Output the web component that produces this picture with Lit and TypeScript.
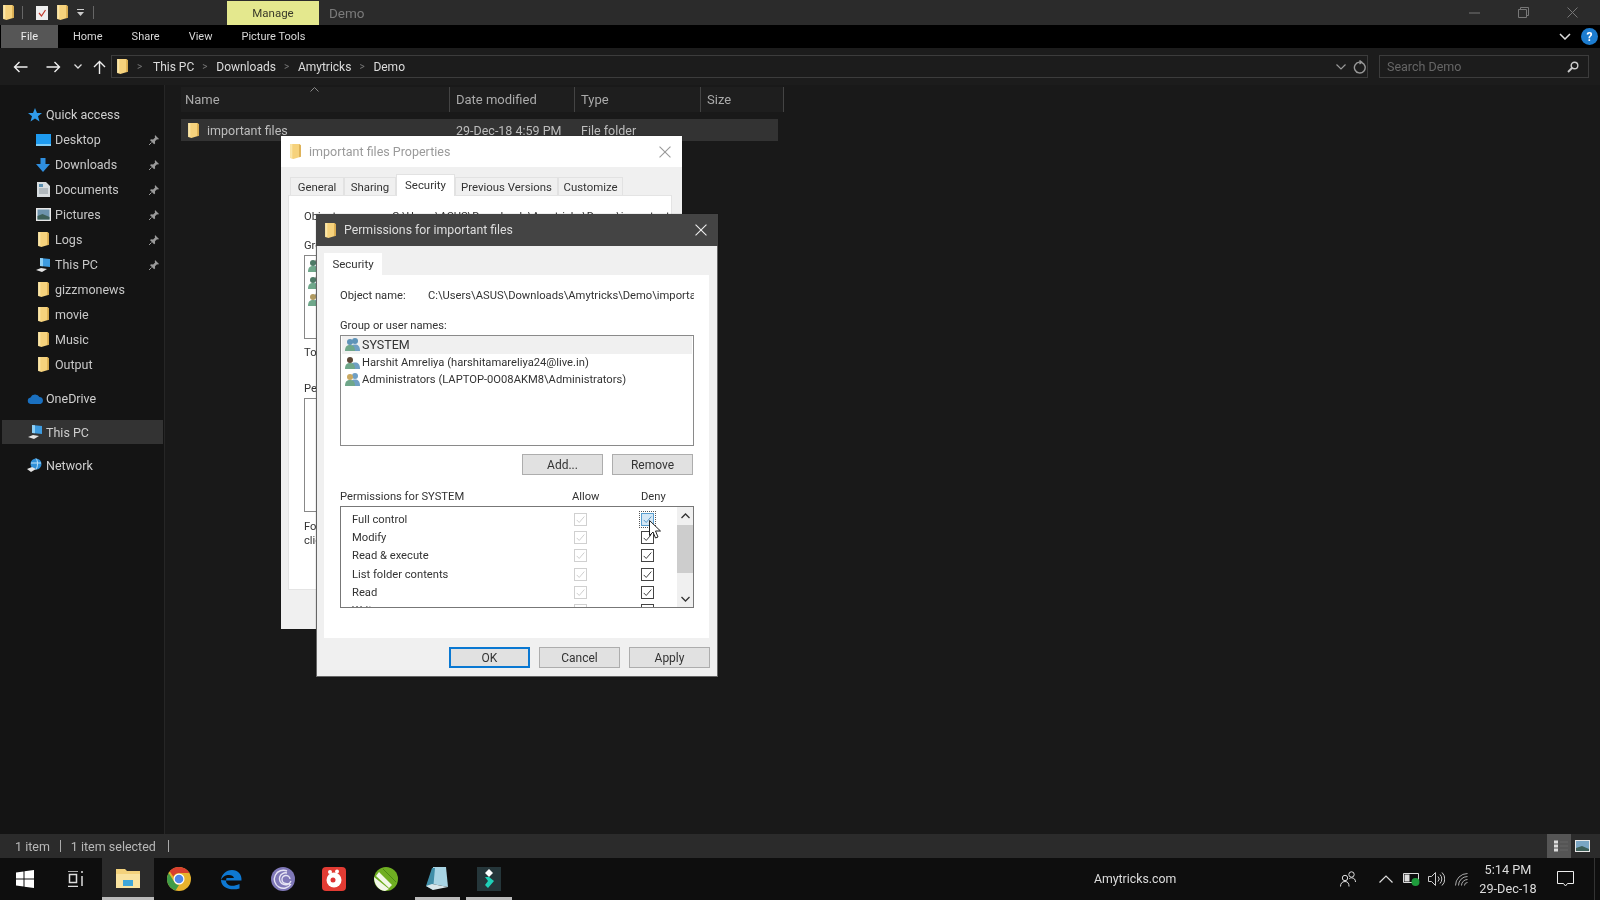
import { LitElement, html, css } from "lit";
import { customElement } from "lit/decorators.js";

const folder = (w = 13, h = 17) => html`<svg width=${w} height=${h} viewBox="0 0 12 16"><path d="M1 1h8.5l1.5 1v11l-7 2-3-1z" fill="#f6d27c"/><path d="M1 1h2v13H1z" fill="#fbe6a8"/><path d="M9.5 1l1.5 1v11l-1.5.4z" fill="#d9ab4e"/></svg>`;
const pin = html`<svg class="pin" width="12" height="12" viewBox="0 0 12 12"><path d="M7 1l4 4-1 .6-1-.3-2 2 .1 2.2-1 .8-4-4 .8-1 2.2.1 2-2-.3-1z" fill="#9a9a9a"/><path d="M3.5 8.5L1 11" stroke="#9a9a9a"/></svg>`;
const pc = html`<svg width="17" height="16" viewBox="0 0 17 16"><path d="M5 1l10 1v8l-10-1z" fill="#3d9be0"/><path d="M5 1l3 .3v8L5 9z" fill="#8fd0f5"/><path d="M1 13l5-2 6 1-5 3z" fill="#e4e4e4"/></svg>`;
const users = (a: string, b: string) => html`<svg class="user" width="15" height="15" viewBox="0 0 15 15"><circle cx="10" cy="4" r="3" fill=${b}/><path d="M5 14c0-5 2-6.5 5-6.5s5 1.5 5 6.5z" fill="#6f9fc4"/><circle cx="5" cy="5" r="3" fill=${a}/><path d="M0 14c0-4.5 2-6 5-6s5 1.5 5 6z" fill="#6fa78a"/></svg>`;
const tick = html`<svg viewBox="0 0 13 13" width="11" height="11"><path d="M2 7l3 3 6-7" fill="none" stroke="currentColor" stroke-width="1.1"/></svg>`;

@customElement("app-root")
export class AppRoot extends LitElement {
  static styles = css`
    :host { display: block; width: 1600px; height: 900px; overflow: hidden; position: relative; background: #191919; font-family: Roboto, "Open Sans", sans-serif; font-size: 12.5px; color: #d0d0d0; filter: blur(0.35px); }
    svg { display: block; flex: none; }
    .shell { display: flex; flex-direction: column; height: 900px; }

    .titlebar { height: 25px; background: #2b2b2b; display: flex; align-items: center; flex: none; }
    .qat { display: flex; align-items: center; width: 227px; padding-left: 2px; box-sizing: border-box; }
    .qat .sep { width: 1px; height: 13px; background: #666; }
    .qat-1 { margin-left: 7px; margin-right: 13px; }
    .qat-doc { margin-right: 8px; }
    .qat-fold { margin-right: 8px; }
    .qat-down { margin-right: 9px; }
    .manage { width: 92px; height: 24px; margin-top: 1px; background: #e4e88e; color: #3a3a2a; display: flex; align-items: center; justify-content: center; font-size: 11.5px; }
    .doc-title { margin-left: 10px; color: #7b7b7b; font-size: 13.5px; flex: 1; }
    .winbtns { display: flex; align-items: center; gap: 38px; padding-right: 22px; }

    .ribbon { height: 23px; background: #000; display: flex; align-items: center; flex: none; font-size: 11px; color: #d8d8d8; padding-left: 1px; }
    .file { width: 57px; height: 23px; background: #565656; color: #eee; display: flex; align-items: center; justify-content: center; margin-right: 15px; }
    .rtab-home { margin-right: 29px; }
    .rtab-share { margin-right: 29px; }
    .rtab-view { margin-right: 29px; }
    .ribbon-end { margin-left: auto; display: flex; align-items: center; gap: 10px; padding-right: 2px; }
    .help { width: 17px; height: 17px; border-radius: 50%; background: #1c7ccf; color: #fff; font-size: 12px; font-weight: 700; display: flex; align-items: center; justify-content: center; }

    .addressrow { height: 37px; background: #1c1c1c; flex: none; display: flex; align-items: center; padding-left: 13px; }
    .nav { display: flex; align-items: center; width: 98px; }
    .nav-back { margin-right: 18px; }
    .nav-fwd { margin-right: 13px; }
    .nav-down { margin-right: 11px; }
    .address { width: 1257px; height: 23px; box-sizing: border-box; border: 1px solid #3c3c3c; display: flex; align-items: center; padding-left: 4px; color: #dcdcdc; font-size: 12px; }
    .crumb-sep { color: #777; font-size: 10px; width: 7px; flex: none; }
    .c1 { margin: 0 9px 0 8px; }
    .crumb-sep.c { margin: 0 7px 0 8px; }
    .address-end { margin-left: auto; display: flex; align-items: center; gap: 7px; padding-right: 1px; }
    .search { width: 210px; height: 23px; margin-left: 11px; box-sizing: border-box; border: 1px solid #3c3c3c; display: flex; align-items: center; justify-content: space-between; padding: 0 9px 0 7px; color: #666; font-size: 12.5px; }

    .body { flex: 1; display: flex; min-height: 0; }
    .side { width: 165px; box-sizing: border-box; background: #141414; border-right: 1px solid #262626; padding: 17px 0 0 0; flex: none; }
    .item { height: 25px; display: flex; align-items: center; padding-left: 31px; position: relative; color: #c8c8c8; }
    .item .ic { width: 24px; display: flex; justify-content: center; }
    .item .pin { position: absolute; left: 148px; top: 7px; }
    .item.top { padding-left: 24px; color: #cfcfcf; }
    .item.top .ic { width: 22px; }
    .gap { margin-top: 9px; }
    .item.sel { background: #333; margin: 9px 1px 0 2px; padding-left: 22px; height: 24px; }

    .main { flex: 1; padding: 2px 0 0 16px; background: #191919; }
    .cols { display: grid; grid-template-columns: 269px 125px 126px 83px; width: 603px; }
    .head { height: 25px; align-items: center; color: #aaa; background: #1e1e1e; position: relative; font-size: 13px; }
    .head div { height: 25px; display: flex; align-items: center; padding-left: 6px; border-right: 1px solid #444; box-sizing: border-box; }
    .head div:first-child { padding-left: 4px; }
    .caret { position: absolute; left: 129px; top: 0; }
    .row { height: 22px; margin-top: 7px; width: 597px; background: #333; align-items: center; color: #bdbdbd; }
    .row div { padding-left: 6px; }
    .namecell { display: flex; align-items: center; gap: 7px; }

    .status { height: 24px; flex: none; background: #2b2b2b; display: flex; align-items: center; padding-left: 15px; color: #b8b8b8; font-size: 12.5px; }
    .status i { width: 1px; height: 12px; background: #aaa; margin: 0 10px; }
    .status i.end { margin-left: 12px; }
    .viewbtns { margin-left: auto; display: flex; align-items: center; height: 24px; padding-right: 10px; gap: 4px; }
    .vb-on { width: 24px; height: 24px; background: #555; display: flex; align-items: center; padding-left: 7px; box-sizing: border-box; }

    .taskbar { height: 42px; flex: none; background: #0e0e0e; display: flex; align-items: center; color: #ddd; position: relative; }
    .tb { width: 51.6px; height: 42px; box-sizing: border-box; display: flex; align-items: center; justify-content: center; flex: none; }
    .tb-start { width: 50px; }
    .tb-view { width: 52px; }
    .tb-active { background: #2b2b2b; border-bottom: 3px solid #bbb; }
    .tb-open { position: relative; }
    .tb-open::after { content: ""; position: absolute; left: 3px; right: 3px; bottom: 0; height: 3px; background: #bbb; }
    .brand { margin-left: 579.2px; font-size: 12.3px; width: 246px; flex: none; }
    .tray { display: flex; align-items: center; }
    .clock { width: 80px; text-align: center; font-size: 12.7px; line-height: 19px; }
    .tr-1 { margin-right: 22px; }
    .tr-2 { margin-right: 10px; }
    .tr-3 { margin-right: 8px; }
    .tr-4 { margin-right: 10px; }
    .notif { margin-left: 9px; }
    .desk { width: 1px; height: 42px; background: #333; margin-left: 20px; }

    .window { position: absolute; box-sizing: border-box; background: #f0f0f0; color: #222; font-size: 11.2px; box-shadow: 0 0 1px #0006; }
    .props { left: 281px; top: 136px; width: 401px; height: 493px; }
    .perms { left: 316px; top: 214px; width: 402px; height: 463px; border: 1px solid #666; border-top: none; }
    .wtitle { height: 31px; display: flex; align-items: center; gap: 7px; padding: 0 11px 0 8px; font-size: 12.5px; }
    .wtitle span { flex: 1; }
    .props .wtitle { background: #fff; color: #9a9a9a; }
    .perms .wtitle { height: 32px; background: #444; color: #ddd; margin: 0 -1px; padding-left: 8px; font-size: 12.3px; }

    .tabs { display: flex; align-items: flex-end; height: 28px; padding-left: 9px; font-size: 11.4px; color: #333; }
    .tab { height: 18px; display: flex; align-items: center; justify-content: center; background: #f0f0f0; border: 1px solid #e2e2e2; border-bottom: none; box-sizing: border-box; }
    .tab.on { height: 22px; background: #fff; margin-bottom: -1px; position: relative; padding-bottom: 2px; }
    .t1 { width: 54px; } .t2 { width: 52px; } .t3 { width: 59px; } .t4 { width: 103px; } .t5 { width: 65px; }
    .panel { margin: 0 10px 0 7px; height: 395px; background: #fff; border: 1px solid #e4e4e4; box-sizing: border-box; padding: 11px 0 0 15px; color: #333; }
    .props-obj { display: flex; height: 18px; align-items: center; white-space: nowrap; overflow: hidden; }
    .props-obj b { font-weight: 400; width: 88px; flex: none; }
    .stub-label { height: 18px; display: flex; align-items: center; margin-top: 11px; }
    .stub-box { border: 1px solid #888; width: 300px; box-sizing: border-box; }
    .stub-1 { height: 84px; margin-top: 1px; padding: 2px 0 0 3px; display: flex; flex-direction: column; gap: 2px; }
    .stub-2 { height: 114px; margin-top: 1px; }
    .stub-3 { margin-top: 4px; }
    .stub-4 { margin-top: 18px; }
    .stub-5 { margin-top: 7px; height: 14px; }
    .stub-6 { margin-top: 0; height: 14px; }

    .secpane { margin: 0 8px 0 7px; }
    .sectabs { height: 29px; display: flex; align-items: flex-end; }
    .sectab { width: 58px; height: 22px; background: #fff; display: flex; align-items: center; justify-content: center; font-size: 11.5px; color: #333; }
    .secbody { height: 363px; background: #fff; padding: 11px 15px 0 16px; box-sizing: border-box; color: #333; }
    .objrow { height: 18px; display: flex; align-items: center; white-space: nowrap; overflow: hidden; }
    .objrow b { font-weight: 400; width: 88px; flex: none; }
    .label { height: 18px; display: flex; align-items: center; margin-top: 12px; margin-bottom: 1px; }
    .users { height: 111px; border: 1px solid #8a8a8a; box-sizing: border-box; padding: 0 1px 1px; }
    .urow { height: 17.5px; display: flex; align-items: center; gap: 2px; padding-left: 3px; }
    .urow.first { background: #f0f0f0; color: #333; font-size: 12.5px; }
    .btnrow { display: flex; justify-content: flex-end; gap: 9px; margin: 8px 1px 0 0; }
    .btn { width: 81px; height: 21px; box-sizing: border-box; background: #e1e1e1; border: 1px solid #adadad; display: flex; align-items: center; justify-content: center; font-size: 12px; color: #333; }
    .btn.def { border: 2px solid #0a78d2; }
    .permhead { display: grid; grid-template-columns: 228px 69px 60px; height: 18px; align-items: center; margin-top: 12px; margin-bottom: 1px; }
    .permhead span:nth-child(n+2) { padding-left: 4px; }
    .permlist { height: 102px; border: 1px solid #777; box-sizing: border-box; display: flex; }
    .rows { flex: 1; overflow: hidden; padding-top: 3px; }
    .prow { height: 18.3px; display: grid; grid-template-columns: 222px 67px 60px; padding-left: 11px; align-items: center; }
    .cb { width: 13px; height: 13px; box-sizing: border-box; border: 1px solid #444; display: flex; align-items: center; justify-content: center; color: #333; }
    .cb.off { border-color: #d0d0d0; color: #cacaca; }
    .cb.focus { border-color: #5a9fd0; background: #d5e8f6; color: #4a90c4; outline: 1px dotted #555; outline-offset: 1px; }
    .scroll { width: 16px; background: #f0f0f0; display: flex; flex-direction: column; align-items: center; }
    .thumb { width: 16px; height: 48px; background: #cdcdcd; }
    .sarrow { height: 18px; display: flex; align-items: center; justify-content: center; }
    .sarrow.dn { margin-top: auto; height: 17px; }
    .footer { display: flex; justify-content: flex-end; gap: 9px; padding: 9px 7px 0 0; }
    .cursor { position: absolute; left: 649px; top: 520px; }
  `;

  navArrow(flip: boolean) {
    return html`<svg width="15" height="12" viewBox="0 0 15 12" style=${flip ? "transform:scaleX(-1)" : ""}><path d="M14.5 6H1.5M6.5 1L1.5 6l5 5" fill="none" stroke="#eee" stroke-width="1.4"/></svg>`;
  }

  sideItem(label: string, icon: unknown, pinned = false) {
    return html`<div class="item"><span class="ic">${icon}</span><span>${label}</span>${pinned ? pin : ""}</div>`;
  }

  permRow(label: string, focus = false) {
    return html`<div class="prow"><span>${label}</span><span class="cb off">${tick}</span><span class="cb ${focus ? "focus" : ""}">${tick}</span></div>`;
  }

  render() {
    const desktop = html`<svg width="15" height="12" viewBox="0 0 15 12"><rect width="15" height="11" fill="#1e9bf0"/><rect y="10" width="15" height="2" fill="#7fcdf7"/></svg>`;
    const down = html`<svg width="14" height="14" viewBox="0 0 14 14"><path d="M4.5 0h5v6H14l-7 8-7-8h4.5z" fill="#2f8fe0"/></svg>`;
    const docs = html`<svg width="13" height="15" viewBox="0 0 13 15"><path d="M0 0h9l4 4v11H0z" fill="#d8dde0"/><path d="M2 2h4v3H2z" fill="#5a8fb0"/><path d="M2 7h9M2 9h9M2 11h9" stroke="#8a959c"/></svg>`;
    const pics = html`<svg width="15" height="13" viewBox="0 0 15 13"><rect width="15" height="13" fill="#e8e8e8"/><rect x="1.5" y="1.5" width="12" height="10" fill="#6d93ad"/><path d="M1.5 11.5L1.5 8l5-2 7 3v2.5z" fill="#3d5f58"/></svg>`;
    const star = html`<svg width="14" height="14" viewBox="0 0 14 14"><path d="M7 0l2 5h5l-4 3.3 1.5 5.2L7 10.5l-4.5 3L4 8.3 0 5h5z" fill="#2f9bea"/></svg>`;
    const cloud = html`<svg width="17" height="11" viewBox="0 0 17 11"><path d="M3.5 11a3.3 3.3 0 010-6.500A5 5 0 0112.5 4a3.6 3.6 0 011 7z" fill="#1a70c0"/></svg>`;
    const net = html`<svg width="16" height="16" viewBox="0 0 16 16"><circle cx="9" cy="6" r="5.5" fill="#2f8fd8"/><path d="M9 .5c2 2 2 8 0 11M4 5h10" stroke="#bfe3fa" fill="none"/><path d="M0 11l5-2 4 2-5 3z" fill="#e4e4e4"/></svg>`;
    const X = (c: string, s = 11) => html`<svg width=${s} height=${s} viewBox="0 0 11 11"><path d="M.5.5l10 10M10.500.5l-10 10" stroke=${c} fill="none"/></svg>`;

    return html`
      <div class="shell">
        <div class="titlebar">
          <div class="qat">
            ${folder()}
            <span class="sep qat-1"></span>
            <svg class="qat-doc" width="12" height="14" viewBox="0 0 12 14"><rect width="12" height="14" fill="#eee"/><path d="M3 7l2.5 3L9.5 4" stroke="#c0392b" fill="none" stroke-width="1.2"/></svg>
            <span class="qat-fold">${folder()}</span>
            <svg class="qat-down" width="7" height="7" viewBox="0 0 7 7"><path d="M0 0h7v1H0zM0 3h7L3.5 7z" fill="#ccc"/></svg>
            <span class="sep"></span>
          </div>
          <div class="manage">Manage</div>
          <div class="doc-title">Demo</div>
          <div class="winbtns">
            <svg width="11" height="2" viewBox="0 0 11 2"><path d="M0 1h11" stroke="#777"/></svg>
            <svg width="11" height="11" viewBox="0 0 11 11"><path d="M.5 2.5h8v8h-8zM2.5 2.5v-2h8v8h-2" fill="none" stroke="#777"/></svg>
            ${X("#777")}
          </div>
        </div>

        <div class="ribbon">
          <div class="file">File</div>
          <span class="rtab-home">Home</span>
          <span class="rtab-share">Share</span>
          <span class="rtab-view">View</span>
          <span>Picture Tools</span>
          <div class="ribbon-end">
            <svg width="12" height="7" viewBox="0 0 12 7"><path d="M1 1l5 5 5-5" fill="none" stroke="#ddd" stroke-width="1.5"/></svg>
            <div class="help">?</div>
          </div>
        </div>

        <div class="addressrow">
          <div class="nav">
            <span class="nav-back">${this.navArrow(false)}</span>
            <span class="nav-fwd">${this.navArrow(true)}</span>
            <svg class="nav-down" width="8" height="5" viewBox="0 0 8 5"><path d="M.5.5L4 4 7.5.5" fill="none" stroke="#ddd" stroke-width="1.3"/></svg>
            <svg width="13" height="14" viewBox="0 0 13 14"><path d="M6.5 14V1.5M1 7l5.5-5.500L12 7" fill="none" stroke="#eee" stroke-width="1.4"/></svg>
          </div>
          <div class="address">
            ${folder()}
            <span class="crumb-sep c1">&gt;</span>
            <span>This PC</span><span class="crumb-sep c">&gt;</span>
            <span>Downloads</span><span class="crumb-sep c">&gt;</span>
            <span>Amytricks</span><span class="crumb-sep c">&gt;</span>
            <span>Demo</span>
            <div class="address-end">
              <svg width="10" height="6" viewBox="0 0 10 6"><path d="M.5.5L5 5 9.5.5" fill="none" stroke="#999" stroke-width="1.2"/></svg>
              <svg width="13" height="14" viewBox="0 0 12 13"><path d="M8 2.3A5 5 0 116 2h2M6 .5L8 2 6 3.8" fill="none" stroke="#999" stroke-width="1.3"/></svg>
            </div>
          </div>
          <div class="search">
            <span>Search Demo</span>
            <svg width="12" height="12" viewBox="0 0 12 12"><circle cx="7.5" cy="4.5" r="3.3" fill="none" stroke="#ccc" stroke-width="1.4"/><path d="M5 7l-4 4" stroke="#ccc" stroke-width="1.8"/></svg>
          </div>
        </div>

        <div class="body">
          <div class="side">
            <div class="item top"><span class="ic">${star}</span><span>Quick access</span></div>
            ${this.sideItem("Desktop", desktop, true)}
            ${this.sideItem("Downloads", down, true)}
            ${this.sideItem("Documents", docs, true)}
            ${this.sideItem("Pictures", pics, true)}
            ${this.sideItem("Logs", folder(), true)}
            ${this.sideItem("This PC", pc, true)}
            ${this.sideItem("gizzmonews", folder())}
            ${this.sideItem("movie", folder())}
            ${this.sideItem("Music", folder())}
            ${this.sideItem("Output", folder())}
            <div class="item top gap"><span class="ic">${cloud}</span><span>OneDrive</span></div>
            <div class="item top sel"><span class="ic">${pc}</span><span>This PC</span></div>
            <div class="item top gap"><span class="ic">${net}</span><span>Network</span></div>
          </div>
          <div class="main">
            <div class="cols head">
              <div>Name</div><div>Date modified</div><div>Type</div><div>Size</div>
              <svg class="caret" width="9" height="5" viewBox="0 0 9 5"><path d="M.5 4.5l4-4 4 4" fill="none" stroke="#888"/></svg>
            </div>
            <div class="cols row">
              <div class="namecell">${folder()}<span>important files</span></div>
              <div>29-Dec-18 4:59 PM</div>
              <div>File folder</div>
              <div></div>
            </div>
          </div>
        </div>

        <div class="status">
          <span>1 item</span><i></i><span>1 item selected</span><i class="end"></i>
          <div class="viewbtns">
            <div class="vb-on"><svg width="14" height="14" viewBox="0 0 14 14"><path d="M0 1.5h4v3H0zM0 5.500h4v3H0zM0 9.500h4v3H0z" fill="#ddd"/><path d="M6 3h8M6 7h8M6 11h8" stroke="#666"/></svg></div>
            <svg width="15" height="12" viewBox="0 0 15 12"><rect width="15" height="12" fill="#e8e8e8"/><rect x="1" y="1" width="13" height="10" fill="#7aa6c4"/><path d="M1 11V8l6-2 7 3v2z" fill="#3d5f58"/></svg>
          </div>
        </div>

        <div class="taskbar">
          <div class="tb tb-start"><svg width="18" height="18" viewBox="0 0 18 18"><path d="M0 2.5L7.5 1.500v7H0zM8.5 1.300L18 0v8.500H8.500zM0 9.500h7.500v7L0 15.500zM8.500 9.500H18V18l-9.500-1.300z" fill="#fff"/></svg></div>
          <div class="tb tb-view"><svg width="18" height="16" viewBox="0 0 18 16"><path d="M1 0h10M1 15.500h10M2.500 3.500h7v8h-7zM15 0v2M15 5v10" fill="none" stroke="#ddd" stroke-width="1.5"/></svg></div>
          <div class="tb tb-active"><svg width="24" height="20" viewBox="0 0 24 20"><path d="M0 1h9l2 2h13v15H0z" fill="#f3d27c"/><path d="M0 6h24v14H0z" fill="#f9e3a0"/><path d="M7 12h10v6H7z" fill="#3fa6d8"/></svg></div>
          <div class="tb"><svg width="24" height="24" viewBox="0 0 24 24"><circle cx="12" cy="12" r="12" fill="#e8b32d"/><path d="M12 0a12 12 0 0110.4 6H12a6 6 0 00-5.6 3.8L2.6 4.3A12 12 0 0112 0z" fill="#d9402f"/><path d="M1.6 6L7 14.5A6 6 0 0012 18l-3.5 5.5A12 12 0 011.6 6z" fill="#3f9c47"/><circle cx="12" cy="12" r="5.5" fill="#fff"/><circle cx="12" cy="12" r="4.3" fill="#4f86e8"/></svg></div>
          <div class="tb"><svg width="22" height="22" viewBox="0 0 22 22"><path d="M6 12.5h15.5c.5-6-3.5-10.500-9.500-10.500C6 2 1.500 6.500 1 12c1.500-3 4-4.500 6.500-5 3-.5 6 .5 6.500 3H6.500" fill="#0e78d2"/><path d="M6 12.5c0 5 6 7 13.500 3.500v4.500C11 23 1 20 1 12" fill="#0e78d2"/></svg></div>
          <div class="tb"><svg width="24" height="24" viewBox="0 0 24 24"><circle cx="12" cy="12" r="12" fill="#7f78b8"/><path d="M20 17a9 9 0 11-4-13M20 14a6 6 0 11-4-8M19 12a4 4 0 00-8 1c0 2 2 4 8 4" fill="none" stroke="#e6e4f4" stroke-width="1.4"/></svg></div>
          <div class="tb"><svg width="24" height="24" viewBox="0 0 24 24"><rect width="24" height="24" rx="4" fill="#e23b33"/><circle cx="12" cy="13" r="7.5" fill="#fff"/><circle cx="11" cy="13" r="2.5" fill="#d33"/><circle cx="8" cy="5" r="2" fill="#fff"/><circle cx="15" cy="4.5" r="2" fill="#fff"/></svg></div>
          <div class="tb"><svg width="24" height="24" viewBox="0 0 24 24"><circle cx="12" cy="12" r="12" fill="#6fae22"/><path d="M0 10l15 12-4 2C4 23 0 17 0 10zM5 5l13 13-3 3L2 9z" fill="#f2f7e8"/><path d="M9 2l13 13" stroke="#4d8a14"/></svg></div>
          <div class="tb tb-open"><svg width="22" height="24" viewBox="0 0 22 24"><path d="M7 0h13l2 20-16-3z" fill="#a8d4e4"/><path d="M6 1L0 19l7 4 2-22z" fill="#3f8ea8"/><path d="M0 19l7 4 15-3-16-3z" fill="#d8e6ea"/></svg></div>
          <div class="tb tb-open"><svg width="24" height="24" viewBox="0 0 24 24"><rect width="24" height="24" fill="#25363a"/><path d="M12 2l4 4-4 4-4-4z" fill="#fff"/><path d="M8 10h4l5 4-6 7-3-3 3-4z" fill="#1fd0b8"/></svg></div>
          <div class="brand">Amytricks.com</div>
          <div class="tray">
            <svg class="tr-1" width="17" height="16" viewBox="0 0 17 16"><circle cx="11.5" cy="3.5" r="2.7" fill="none" stroke="#ddd"/><circle cx="5" cy="7" r="2.7" fill="none" stroke="#ddd"/><path d="M.5 15.5c0-3 1.5-5 4.5-5s4 2 4 5M9 8c1-1 1.5-1.200 2.500-1.200 2.500 0 4 1.700 4 4.200" fill="none" stroke="#ddd"/></svg>
            <svg class="tr-2" width="14" height="8" viewBox="0 0 14 8"><path d="M.5 7.5L7 1l6.5 6.5" fill="none" stroke="#ddd" stroke-width="1.2"/></svg>
            <svg class="tr-3" width="17" height="14" viewBox="0 0 17 14"><path d="M.5 1.5h15v9H.5z" fill="none" stroke="#ddd"/><rect x="1.5" y="2.5" width="5" height="7" fill="#ddd"/><circle cx="12.5" cy="10" r="4" fill="#1e9c3c"/></svg>
            <svg class="tr-4" width="17" height="14" viewBox="0 0 17 14"><path d="M.5 4.5h3l4-4v13l-4-4h-3zM10 4.500a3.500 3.500 0 010 5M12 2.500a6.500 6.500 0 010 9M14 .5a9 9 0 010 13" fill="none" stroke="#ccc"/></svg>
            <svg width="13" height="13" viewBox="0 0 13 13"><path d="M.5 12.5A12 12 0 0112.5.5M3.500 12.500a9 9 0 019-9M6.500 12.500a6 6 0 016-6M9.500 12.500a3 3 0 013-3" fill="none" stroke="#aaa"/></svg>
            <div class="clock">5:14 PM<br />29-Dec-18</div>
            <svg class="notif" width="17" height="16" viewBox="0 0 17 16"><path d="M.5.5h16v12H10.500L8.500 15l-2-2.500H.5z" fill="none" stroke="#eee"/></svg>
            <div class="desk"></div>
          </div>
        </div>
      </div>

      <div class="window props">
        <div class="wtitle">${folder()}<span>important files Properties</span>${X("#999", 12)}</div>
        <div class="tabs">
          <div class="tab t1">General</div><div class="tab t2">Sharing</div><div class="tab t3 on">Security</div><div class="tab t4">Previous Versions</div><div class="tab t5">Customize</div>
        </div>
        <div class="panel">
          <div class="props-obj"><b>Object name:</b><span>C:\\Users\\ASUS\\Downloads\\Amytricks\\Demo\\important files</span></div>
          <div class="stub-label">Group or user names:</div>
          <div class="stub-box stub-1">${users("#4d7a66", "#888")}${users("#4d7a66", "#888")}${users("#b09a60", "#888")}</div>
          <div class="stub-label stub-3">To change permissions, click Edit.</div>
          <div class="stub-label stub-4">Permissions for SYSTEM</div>
          <div class="stub-box stub-2"></div>
          <div class="stub-label stub-5">For special permissions or advanced settings,</div>
          <div class="stub-label stub-6">click Advanced.</div>
        </div>
      </div>

      <div class="window perms">
        <div class="wtitle">${folder()}<span>Permissions for important files</span>${X("#eee", 12)}</div>
        <div class="secpane">
          <div class="sectabs"><div class="sectab">Security</div></div>
          <div class="secbody">
            <div class="objrow"><b>Object name:</b><span>C:\\Users\\ASUS\\Downloads\\Amytricks\\Demo\\important files</span></div>
            <div class="label">Group or user names:</div>
            <div class="users">
              <div class="urow first">${users("#5e93b8", "#5e93b8")}<span>SYSTEM</span></div>
              <div class="urow"><span>${users("#5b4636", "#fff0")}</span><span>Harshit Amreliya (harshitamareliya24@live.in)</span></div>
              <div class="urow">${users("#c9a860", "#6f9fc4")}<span>Administrators (LAPTOP-0O08AKM8\\Administrators)</span></div>
            </div>
            <div class="btnrow"><div class="btn">Add...</div><div class="btn">Remove</div></div>
            <div class="permhead"><span>Permissions for SYSTEM</span><span>Allow</span><span>Deny</span></div>
            <div class="permlist">
              <div class="rows">
                ${this.permRow("Full control", true)}
                ${this.permRow("Modify")}
                ${this.permRow("Read & execute")}
                ${this.permRow("List folder contents")}
                ${this.permRow("Read")}
                ${this.permRow("Write")}
              </div>
              <div class="scroll">
                <div class="sarrow"><svg width="9" height="6" viewBox="0 0 9 6"><path d="M.5 5L4.5 1l4 4" fill="none" stroke="#333" stroke-width="1.3"/></svg></div>
                <div class="thumb"></div>
                <div class="sarrow dn"><svg width="9" height="6" viewBox="0 0 9 6"><path d="M.5 1l4 4 4-4" fill="none" stroke="#333" stroke-width="1.3"/></svg></div>
              </div>
            </div>
          </div>
        </div>
        <div class="footer"><div class="btn def">OK</div><div class="btn">Cancel</div><div class="btn">Apply</div></div>
      </div>

      <svg class="cursor" width="12" height="19" viewBox="0 0 12 19"><path d="M.5.5v15l3.5-3.500 2.500 6 2.500-1-2.500-6h5z" fill="#fff" stroke="#222"/></svg>
    `;
  }
}
